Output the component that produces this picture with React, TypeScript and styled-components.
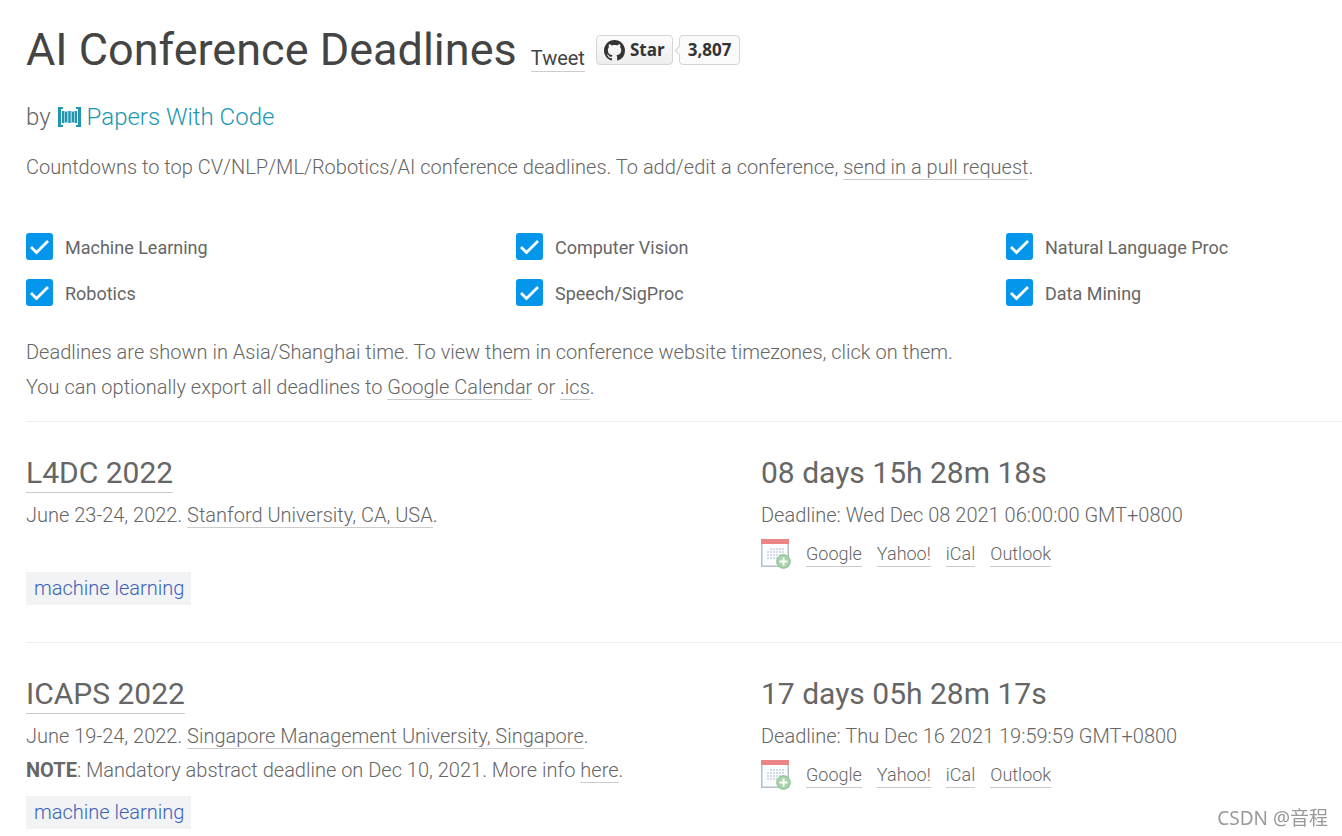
import React from "react";
import styled, { createGlobalStyle } from "styled-components";

const GlobalStyle = createGlobalStyle`
  * { box-sizing: border-box; }
  html { overflow: hidden; }
  body {
    margin: 0;
    background: #fff;
    color: #666;
    font-family: Roboto, "Liberation Sans", sans-serif;
    font-size: 20px;
    font-weight: 300;
    line-height: 35px;
  }
  p, h1, h2 { margin: 0; }
`;

const Page = styled.main`
  padding: 20px 0 0 26px;
`;

const Header = styled.header`
  display: flex;
  align-items: baseline;
  height: 60px;
`;

const Title = styled.h1`
  margin-right: 14px;
  color: #444;
  font-size: 45px;
  font-weight: 400;
  line-height: 60px;
`;

const Link = styled.a`
  color: inherit;
  text-decoration: none;
  border-bottom: 1px solid #ccc;
`;

const TweetLink = styled(Link)`
  color: #444;
  font-weight: 400;
  line-height: 26px;
`;

const StarGroup = styled.div`
  display: flex;
  align-self: flex-start;
  gap: 6px;
  margin: 15px 0 0 11px;
`;

const StarButton = styled.button`
  display: flex;
  align-items: center;
  gap: 5px;
  height: 30px;
  padding: 0 7px;
  border: 1px solid #d5d5d5;
  border-radius: 4px;
  background: linear-gradient(#fcfcfc, #eee);
  color: #333;
  font: 700 17px/28px "Open Sans", "Noto Sans", sans-serif;
`;

const StarCount = styled.a`
  position: relative;
  height: 30px;
  padding: 0 8px;
  border: 1px solid #d4d4d4;
  border-radius: 4px;
  background: #fafafa;
  color: #333;
  font: 700 17px/28px "Open Sans", "Noto Sans", sans-serif;
  text-decoration: none;

  &::before {
    content: "";
    position: absolute;
    top: 11px;
    left: -4px;
    width: 6px;
    height: 6px;
    border: solid #d4d4d4;
    border-width: 0 0 1px 1px;
    background: #fafafa;
    transform: rotate(45deg);
  }
`;

const Byline = styled.p`
  display: flex;
  align-items: center;
  height: 40px;
  margin-top: 17px;
  font-size: 24px;
`;

const Brand = styled.a`
  display: flex;
  align-items: center;
  gap: 6px;
  margin-left: 7px;
  color: #2196b3;
  text-decoration: none;
`;

const Intro = styled.p`
  margin-top: 13px;
`;

const Filters = styled.form`
  display: grid;
  grid-template-columns: 490fr 490fr 336fr;
  row-gap: 16px;
  margin-top: 48px;
`;

const FilterLabel = styled.label`
  display: flex;
  align-items: flex-start;
  gap: 12px;
  font-size: 18px;
  font-weight: 400;
  line-height: 30px;
`;

const CheckHolder = styled.span`
  display: grid;
  width: 27px;
  height: 27px;

  > * { grid-area: 1 / 1; }
`;

const CheckInput = styled.input`
  appearance: none;
  width: 27px;
  height: 27px;
  margin: 0;
  border: 2px solid #0396eb;
  border-radius: 3px;

  &:checked { background: #0396eb; }
  &:not(:checked) + svg { visibility: hidden; }
`;

const CheckMark = styled.svg`
  pointer-events: none;
`;

const Notes = styled.div`
  margin-top: 26px;
  padding-bottom: 16px;
`;

const Conference = styled.article`
  display: grid;
  grid-template-columns: 735fr 581fr;
  min-height: 221px;
  padding-top: 30px;
  border-top: 1px solid #eee;
`;

const Heading = styled.h2`
  height: 46px;
  font-size: 30px;
  font-weight: 400;
  line-height: 42px;
`;

const NameLink = styled(Link)`
  display: inline-block;
  height: 41px;
`;

const Detail = styled.p`
  min-height: 31px;
  line-height: 34px;
`;

const Strong = styled.strong`
  font-weight: 700;
`;

const Tag = styled.a`
  display: inline-block;
  margin-top: 9px;
  padding: 0 7px 0 8px;
  background: #f1f3f5;
  color: #3a62b8;
  line-height: 33px;
  text-decoration: none;
`;

const CalendarRow = styled.nav`
  display: flex;
  align-items: center;
  gap: 15px;
  height: 44px;
  font-size: 18px;
  line-height: 24px;
`;

const CalendarIcon = styled.svg`
  display: block;
  flex: none;
`;

const Watermark = styled.div`
  position: fixed;
  right: 14px;
  bottom: 4px;
  color: #999;
  font: 400 19px/28px "Noto Sans", "Noto Sans CJK SC", sans-serif;
  text-shadow: 1px 1px 0 #fff;
`;

function Octocat() {
  return (
    <svg width="21" height="21" viewBox="0 0 16 16" fill="#333" aria-hidden="true">
      <path d="M8 0C3.58 0 0 3.58 0 8c0 3.54 2.29 6.53 5.47 7.59.4.07.55-.17.55-.38 0-.19-.01-.82-.01-1.49-2.01.37-2.53-.49-2.69-.94-.09-.23-.48-.94-.82-1.13-.28-.15-.68-.52-.01-.53.63-.01 1.08.58 1.23.82.72 1.21 1.87.87 2.33.66.07-.52.28-.87.51-1.07-1.78-.2-3.64-.89-3.64-3.95 0-.87.31-1.59.82-2.15-.08-.2-.36-1.02.08-2.12 0 0 .67-.21 2.2.82.64-.18 1.32-.27 2-.27s1.36.09 2 .27c1.53-1.04 2.2-.82 2.2-.82.44 1.1.16 1.92.08 2.12.51.56.82 1.27.82 2.15 0 3.07-1.87 3.75-3.65 3.95.29.25.54.73.54 1.48 0 1.07-.01 1.93-.01 2.2 0 .21.15.46.55.38A8.01 8.01 0 0 0 16 8c0-4.42-3.58-8-8-8z" />
    </svg>
  );
}

function BrandMark() {
  return (
    <svg width="23" height="20" viewBox="0 0 23 20" fill="#2196b3" aria-hidden="true">
      <path d="M0 0h5v2H3v16h2v2H0zM23 0h-5v2h2v16h-2v2h5z" />
      <path opacity=".45" d="M4 4h15v12H4z" />
      <path d="M4 4h2v12H4zM7 5h2v10H7zM10.500 4h2v12h-2zM14 5h2v10h-2zM17 4h2v12h-2z" />
    </svg>
  );
}

function Calendar() {
  const columns = [8, 11, 14, 17, 20, 23];
  const rows = [10, 13, 16, 19];
  return (
    <CalendarIcon width="30" height="30" viewBox="0 0 30 30" aria-hidden="true">
      <path d="M.75 2v25.250h26.500V2" fill="#fbfcfd" stroke="#b3bfc9" strokeWidth="1.500" />
      <path d="M0 0h28v5H0z" fill="#ec8585" />
      {rows.map((y, r) =>
        columns.map((x, c) =>
          (r === 0 && c === 0) || (r === 3 && c > 3) ? null : (
            <rect key={`${x}-${y}`} x={x - 2} y={y - 1} width="2" height="2" fill="#d3dbe4" />
          )
        )
      )}
      <circle cx="22.500" cy="22.500" r="6.800" fill="#a6d3a8" stroke="#86bd90" />
      <path d="M22.500 18.500v8M18.500 22.500h8" stroke="#fff" strokeWidth="2" />
    </CalendarIcon>
  );
}

function Filter({ name }: { name: string }) {
  return (
    <FilterLabel>
      <CheckHolder>
        <CheckInput type="checkbox" defaultChecked />
        <CheckMark width="27" height="27" viewBox="0 0 27 27" fill="none" aria-hidden="true">
          <path d="M5 14l5.500 5.500L22 8" stroke="#fff" strokeWidth="2.800" />
        </CheckMark>
      </CheckHolder>
      {name}
    </FilterLabel>
  );
}

interface ConferenceData {
  name: string;
  dates: string;
  place: string;
  countdown: string;
  deadline: string;
  note?: string;
}

const conferences: ConferenceData[] = [
  {
    name: "L4DC 2022",
    dates: "June 23-24, 2022.",
    place: "Stanford University, CA, USA",
    countdown: "08 days 15h 28m 18s",
    deadline: "Wed Dec 08 2021 06:00:00 GMT+0800",
  },
  {
    name: "ICAPS 2022",
    dates: "June 19-24, 2022.",
    place: "Singapore Management University, Singapore",
    countdown: "17 days 05h 28m 17s",
    deadline: "Thu Dec 16 2021 19:59:59 GMT+0800",
    note: "Mandatory abstract deadline on Dec 10, 2021. More info",
  },
];

const topics = [
  "Machine Learning",
  "Computer Vision",
  "Natural Language Proc",
  "Robotics",
  "Speech/SigProc",
  "Data Mining",
];

const calendars = ["Google", "Yahoo!", "iCal", "Outlook"];

export default function App() {
  return (
    <Page>
      <GlobalStyle />
      <Header>
        <Title>AI Conference Deadlines</Title>
        <TweetLink href="#tweet">Tweet</TweetLink>
        <StarGroup>
          <StarButton type="button">
            <Octocat />
            Star
          </StarButton>
          <StarCount href="#stargazers">3,807</StarCount>
        </StarGroup>
      </Header>
      <Byline>
        by
        <Brand href="#papers">
          <BrandMark />
          Papers With Code
        </Brand>
      </Byline>
      <Intro>
        Countdowns to top CV/NLP/ML/Robotics/AI conference deadlines. To add/edit a conference,{" "}
        <Link href="#pull">send in a pull request</Link>.
      </Intro>
      <Filters>
        {topics.map((topic) => (
          <Filter key={topic} name={topic} />
        ))}
      </Filters>
      <Notes>
        <p>
          Deadlines are shown in Asia/Shanghai time. To view them in conference website timezones,
          click on them.
        </p>
        <p>
          You can optionally export all deadlines to <Link href="#gcal">Google Calendar</Link> or{" "}
          <Link href="#ics">.ics</Link>.
        </p>
      </Notes>
      {conferences.map((conf) => (
        <Conference key={conf.name}>
          <div>
            <Heading>
              <NameLink href="#conference">{conf.name}</NameLink>
            </Heading>
            <Detail>
              {conf.dates} <Link href="#place">{conf.place}</Link>.
            </Detail>
            <Detail>
              {conf.note && (
                <>
                  <Strong>NOTE</Strong>: {conf.note} <Link href="#note">here</Link>.
                </>
              )}
            </Detail>
            <Tag href="#ml">machine learning</Tag>
          </div>
          <div>
            <Heading>{conf.countdown}</Heading>
            <Detail>Deadline: {conf.deadline}</Detail>
            <CalendarRow>
              <Calendar />
              {calendars.map((calendar) => (
                <Link key={calendar} href="#calendar">
                  {calendar}
                </Link>
              ))}
            </CalendarRow>
          </div>
        </Conference>
      ))}
      <Watermark>CSDN @音程</Watermark>
    </Page>
  );
}
